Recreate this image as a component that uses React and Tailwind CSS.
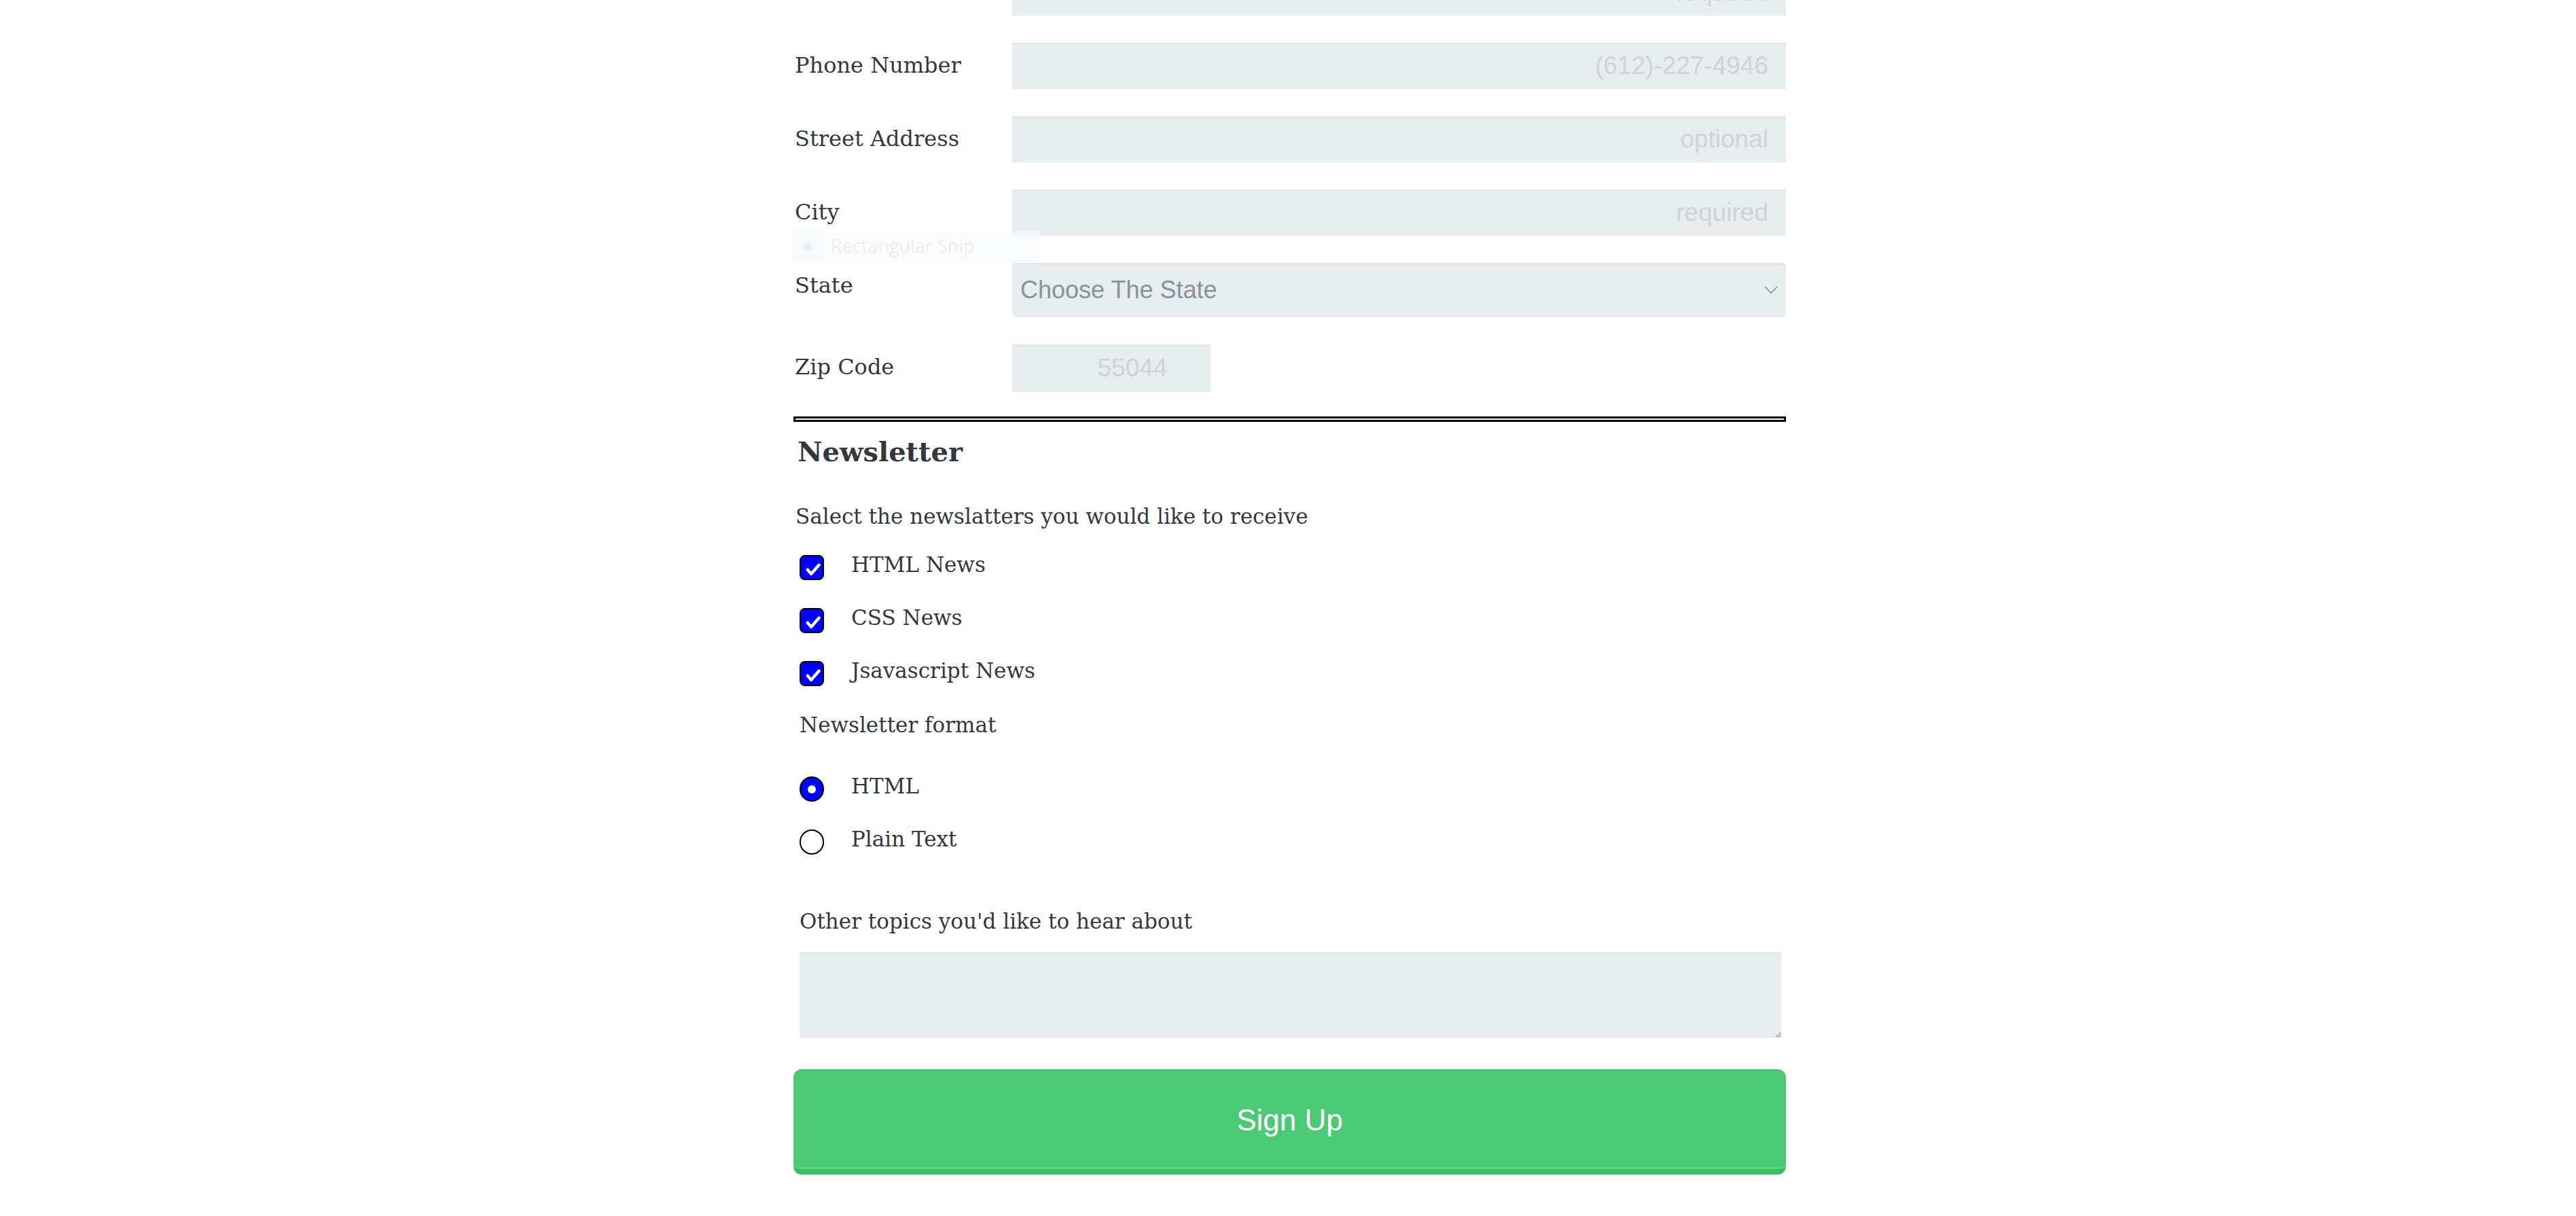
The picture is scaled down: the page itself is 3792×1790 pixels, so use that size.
import React from "react";

const serif = "font-['DejaVu_Serif',serif]";
const sans = "font-['Liberation_Sans',Arial,sans-serif]";

function Field({ label, placeholder, className = "" }) {
  return (
    <div className={`flex items-start ${className}`}>
      <label className={`${serif} w-[322px] shrink-0 pl-[2px] text-[32px] leading-[66px] text-[#33383d]`}>
        {label}
      </label>
      <input
        type="text"
        placeholder={placeholder}
        className={`${sans} h-[68px] w-[1139px] bg-[#e7ecef] pr-[26px] text-right text-[37px] text-[#495057] shadow-[inset_0_2px_0_0_#dfe4e7] outline-none placeholder:text-[#d2d2d2]`}
      />
    </div>
  );
}

function CheckBox() {
  return (
    <span className="flex h-[37px] w-[36px] shrink-0 items-center justify-center rounded-[8px] border-[2.5px] border-black bg-[#0000ff]">
      <svg viewBox="0 0 36 36" className="h-[36px] w-[36px]">
        <polyline points="11,21 17,28 30,13" fill="none" stroke="white" strokeWidth="5" strokeLinecap="round" strokeLinejoin="round" />
      </svg>
    </span>
  );
}

function Radio({ checked }) {
  return (
    <span
      className={`flex h-[37px] w-[36px] shrink-0 items-center justify-center rounded-full border-[2.5px] border-black ${
        checked ? "bg-[#0000ff]" : "bg-white"
      }`}
    >
      {checked && <span className="h-[12px] w-[12px] rounded-full bg-white" />}
    </span>
  );
}

function OptionRow({ children, label }) {
  return (
    <div className="ml-[9px] flex h-[37px] items-start gap-[40px]">
      {children}
      <span className={`${serif} text-[31px] leading-[29px] text-[#33383d]`}>{label}</span>
    </div>
  );
}

export default function App() {
  return (
    <div className="h-[1790px] overflow-hidden bg-white">
      <div className="mx-auto flex w-[1466px] flex-col pl-[5px]">
        {/* contact fields, first one scrolled out of view */}
        <div className="-mt-[45px] flex flex-col gap-[40px]">
          <Field label="Email" placeholder="required" />
          <Field label="Phone Number" placeholder="(612)-227-4946" />
          <Field label="Street Address" placeholder="optional" />
          <Field label="City" placeholder="required" />

          <div className="relative flex items-start">
            {/* faint snipping tool ghost */}
            <div className="pointer-events-none absolute left-[-2px] top-[-47px] flex h-[45px] w-[364px] items-center bg-[#f8fafd]/80">
              <span className="flex h-full w-[46px] items-center justify-center bg-[#f5f8fc]">
                <span className="h-[12px] w-[12px] rounded-full bg-[#efeeee]" />
              </span>
              <span className="ml-[11px] font-['Open_Sans',sans-serif] text-[27px] text-[#eeeeee]">Rectangular Snip</span>
            </div>
            <label className={`${serif} w-[322px] shrink-0 pl-[2px] text-[32px] leading-[66px] text-[#33383d]`}>State</label>
            <div className="flex h-[80px] w-[1139px] items-center justify-between rounded-[6px] bg-[#e7ecef] pl-[12px] pr-[12px] shadow-[inset_0_2px_0_0_#dfe4e7]">
              <span className={`${sans} text-[36px] text-[#89929a]`}>Choose The State</span>
              <svg viewBox="0 0 20 12" className="h-[12px] w-[20px]">
                <polyline points="1,1 10,10.5 19,1" fill="none" stroke="#7f888f" strokeWidth="1.5" />
              </svg>
            </div>
          </div>

          <div className="flex items-start">
            <label className={`${serif} w-[322px] shrink-0 pl-[2px] text-[32px] leading-[66px] text-[#33383d]`}>Zip Code</label>
            <input
              type="text"
              placeholder="55044"
              className={`${sans} h-[70px] w-[292px] bg-[#e7ecef] pl-[62px] text-center text-[37px] shadow-[inset_0_2px_0_0_#dfe4e7] outline-none placeholder:text-[#d2d2d2]`}
            />
          </div>
        </div>

        <div className="mt-[36px] h-[8px] border-[3px] border-black bg-white" />

        <h2 className={`${serif} mt-[20px] pl-[6px] text-[40px] font-bold leading-[48px] text-[#33383d]`}>Newsletter</h2>

        <p className={`${serif} mt-[53px] pl-[3px] text-[31px] leading-[36px] text-[#33383d]`}>
          Salect the newslatters you would like to receive
        </p>

        <div className="mt-[39px] flex flex-col gap-[41px]">
          <OptionRow label="HTML News">
            <CheckBox />
          </OptionRow>
          <OptionRow label="CSS News">
            <CheckBox />
          </OptionRow>
          <OptionRow label="Jsavascript News">
            <CheckBox />
          </OptionRow>
        </div>

        <p className={`${serif} mt-[39px] pl-[9px] text-[31px] leading-[36px] text-[#33383d]`}>Newsletter format</p>

        <div className="mt-[58px] flex flex-col gap-[41px]">
          <OptionRow label="HTML">
            <Radio checked />
          </OptionRow>
          <OptionRow label="Plain Text">
            <Radio />
          </OptionRow>
        </div>

        <p className={`${serif} mt-[80px] pl-[9px] text-[31px] leading-[36px] text-[#33383d]`}>
          Other topics you'd like to hear about
        </p>

        <textarea className="ml-[9px] mt-[28px] h-[126px] w-[1445px] bg-[#e7ecef] shadow-[inset_0_2px_0_0_#dfe4e7] outline-none" />

        <button
          type="button"
          className={`${sans} mt-[46px] h-[155px] w-full rounded-[12px] border-t-2 border-b-[8px] border-t-[#42c46a] border-b-[#3abf60] bg-[#4bc974] text-[44px] text-white shadow-[inset_0_-3px_0_0_#5cd183]`}
        >
          Sign Up
        </button>
      </div>
    </div>
  );
}
